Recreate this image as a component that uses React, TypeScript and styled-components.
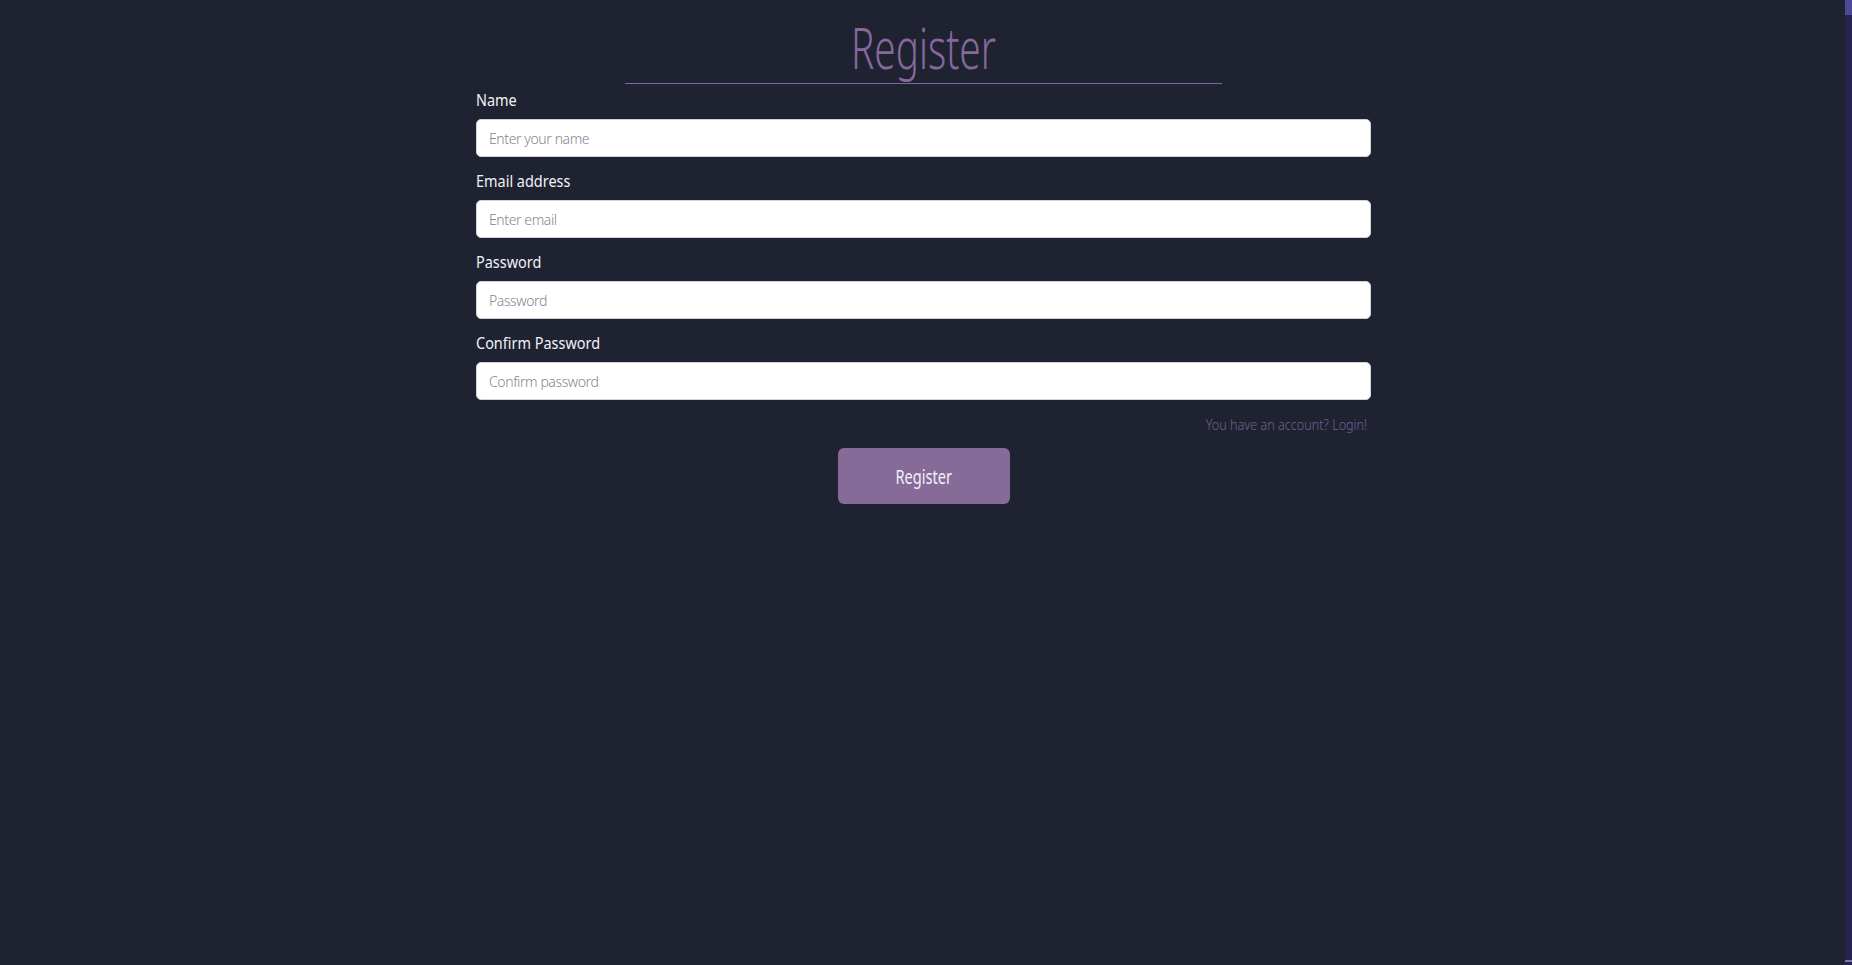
import React from "react";
import styled, { createGlobalStyle } from "styled-components";

const GlobalStyle = createGlobalStyle`
  html, body {
    margin: 0;
    padding: 0;
    height: 100%;
    background: #1e2231;
  }
  body {
    font-family: "Noto Sans", "Open Sans", sans-serif;
    overflow: hidden;
  }
  * { box-sizing: border-box; }
`;

const Shell = styled.div`
  display: flex;
  height: 965px;
  background: #1e2231;
`;

const Page = styled.main`
  flex: 1;
  display: flex;
  justify-content: center;
  padding-left: 2px;
`;

const Rail = styled.div`
  width: 7px;
  display: flex;
  flex-direction: column;
  justify-content: space-between;
  background: #272350;
`;

const RailThumb = styled.div`
  height: 15px;
  background: #4d4796;
`;

const RailEnd = styled.div`
  height: 2px;
  margin-bottom: 3px;
  background: #7a74b0;
`;

const Form = styled.form`
  width: 895px;
  display: flex;
  flex-direction: column;
`;

/* Narrow face: the original uses a condensed rounded font that is not installed */
const Narrow = styled.span<{ $scale: number; $origin?: string }>`
  display: inline-block;
  white-space: nowrap;
  transform: scaleX(${(p) => p.$scale});
  transform-origin: ${(p) => p.$origin ?? "center"};
`;

const Title = styled.h1`
  margin: 14px 0 0;
  font-size: 57px;
  font-weight: 300;
  line-height: 66px;
  color: #85699b;
  text-align: center;
`;

const Rule = styled.hr`
  width: 66.6667%;
  margin: 3px auto 4px;
  border: 0;
  border-top: 1px solid #7c6a9c;
`;

const Group = styled.div`
  display: flex;
  flex-direction: column;
  margin-bottom: 12px;
`;

const Label = styled.label`
  font-size: 17px;
  line-height: 24px;
  margin-bottom: 7px;
  color: #f1f1f6;
`;

const Input = styled.input`
  height: 38px;
  padding: 6px 12px;
  font-family: inherit;
  font-size: 14px;
  font-weight: 300;
  letter-spacing: -0.4px;
  color: #495057;
  background: #ffffff;
  border: 1px solid #ced4da;
  border-radius: 5px;
  outline: none;
  &::placeholder {
    color: #7f8691;
  }
`;

const Hint = styled.p`
  margin: 2px 4px 0 0;
  font-size: 15px;
  font-weight: 300;
  line-height: 20px;
  text-align: right;
  color: #6f6394;
`;

const SubmitRow = styled.div`
  display: flex;
  justify-content: center;
  margin-top: 14px;
`;

const Button = styled.button`
  width: 172px;
  height: 56px;
  font-family: inherit;
  font-size: 20px;
  font-weight: 400;
  color: #f3eef7;
  background: #866a98;
  border: 0;
  border-radius: 6px;
  cursor: pointer;
`;

const fields = [
  { id: "name", label: "Name", type: "text", placeholder: "Enter your name" },
  { id: "email", label: "Email address", type: "email", placeholder: "Enter email" },
  { id: "password", label: "Password", type: "password", placeholder: "Password" },
  { id: "confirm", label: "Confirm Password", type: "password", placeholder: "Confirm password" },
];

export default function App() {
  return (
    <>
      <GlobalStyle />
      <Shell>
        <Page>
          <Form onSubmit={(e) => e.preventDefault()}>
            <Title>
              <Narrow $scale={0.68}>Register</Narrow>
            </Title>
            <Rule />
            {fields.map((f) => (
              <Group key={f.id}>
                <Label htmlFor={f.id}>
                  <Narrow $scale={0.85} $origin="left">{f.label}</Narrow>
                </Label>
                <Input id={f.id} type={f.type} placeholder={f.placeholder} />
              </Group>
            ))}
            <Hint>
              <Narrow $scale={0.84} $origin="right">You have an account? Login!</Narrow>
            </Hint>
            <SubmitRow>
              <Button type="submit">
                <Narrow $scale={0.73}>Register</Narrow>
              </Button>
            </SubmitRow>
          </Form>
        </Page>
        <Rail>
          <RailThumb />
          <RailEnd />
        </Rail>
      </Shell>
    </>
  );
}
